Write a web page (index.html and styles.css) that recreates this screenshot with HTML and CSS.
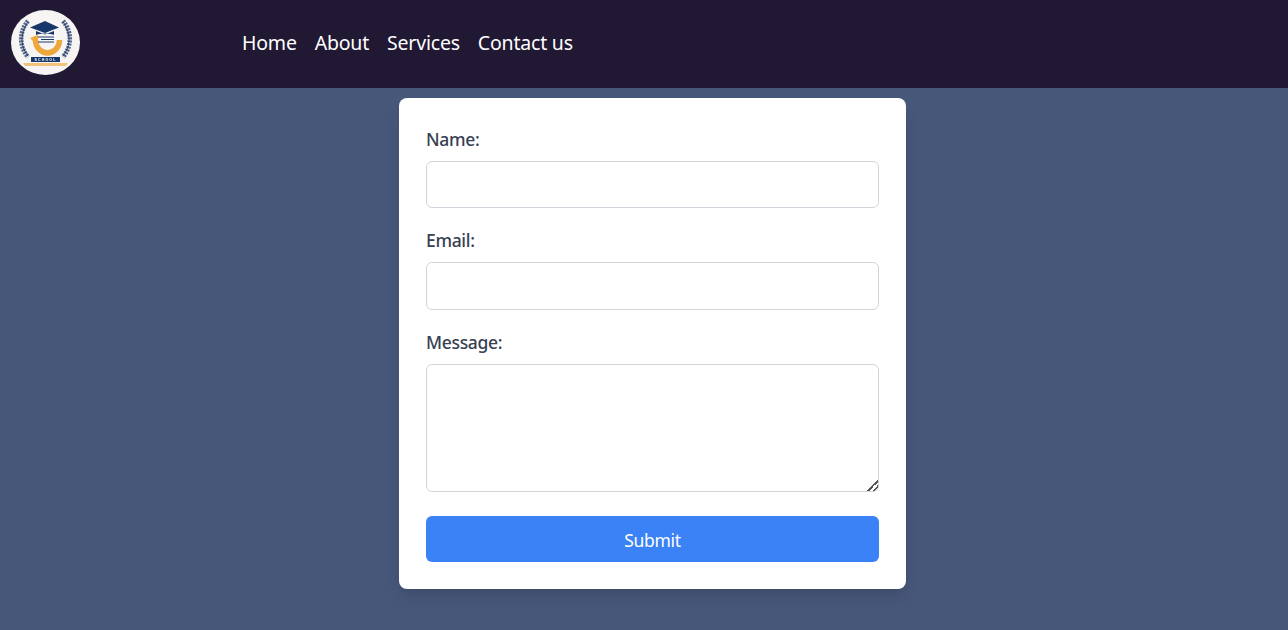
FILE: index.html
```html
<!DOCTYPE html>
<html lang="en">
<head>
<meta charset="utf-8">
<title>Contact</title>
<link rel="stylesheet" href="styles.css">
</head>
<body>
<header class="topbar">
  <svg class="logo" viewBox="0 0 69 65" aria-label="School logo">
    <ellipse cx="34.500" cy="32.500" rx="34.500" ry="32.500" fill="#f6f5f4"/>
    <g fill="none" stroke="#52648c" stroke-width="4.600" stroke-dasharray="2 1">
      <path d="M17 11C9 20 7 35 17 47"/>
      <path d="M52 11C60 20 62 35 52 47"/>
    </g>
    <g fill="none" stroke="#24375f" stroke-width="0.900">
      <path d="M17 12C10 21 8 35 17 46"/>
      <path d="M52 12C59 21 61 35 52 46"/>
    </g>
    <path d="M24.500 30A12 13 0 0 0 48.500 30" fill="none" stroke="#eda73a" stroke-width="5.500"/>
    <path d="M19 28L27 25V31H22Z" fill="#eda73a"/>
    <path d="M34 11L48 17.500L34 23L19 17.500Z" fill="#17376b"/>
    <path d="M25 21V25C30 23 38 23 43 25V21L34 24.500Z" fill="#17376b"/>
    <path d="M27 27H43M30 29.500H43M27 32H43" stroke="#1f3a6b" stroke-width="1.200" fill="none"/>
    <rect x="20" y="47" width="29" height="5" fill="#17376b"/>
    <path d="M12 53H57L55 56H14Z" fill="#f3c27a"/>
    <text class="logo-text" x="34.500" y="51.200">SCHOOL</text>
  </svg>
  <nav class="menu">
    <a href="#">Home</a>
    <a href="#">About</a>
    <a href="#">Services</a>
    <a href="#">Contact us</a>
  </nav>
</header>
<main class="page">
  <form class="card">
    <div class="field">
      <label class="label" for="name">Name:</label>
      <input class="control" id="name" type="text">
    </div>
    <div class="field">
      <label class="label" for="email">Email:</label>
      <input class="control" id="email" type="email">
    </div>
    <div class="field field-last">
      <label class="label" for="message">Message:</label>
      <textarea class="control area" id="message"></textarea>
    </div>
    <button class="submit" type="button">Submit</button>
  </form>
</main>
</body>
</html>
```
FILE: styles.css
```css
* { box-sizing: border-box; }
html, body { height: 100%; }
body {
  margin: 0;
  background: #475779;
  font-family: "Noto Sans", "Open Sans", sans-serif;
  overflow: hidden;
}
.topbar {
  height: 88px;
  background: #211834;
  display: flex;
  align-items: center;
}
.logo {
  width: 69px;
  height: 65px;
  margin-left: 11px;
  margin-top: -3px;
  flex: none;
  filter: blur(0.3px);
}
.logo-text {
  font-family: "Liberation Sans", sans-serif;
  font-size: 3.600px;
  font-weight: 700;
  letter-spacing: 1.100px;
  fill: #ffffff;
  text-anchor: middle;
}
.menu {
  display: flex;
  gap: 18px;
  margin-left: 162px;
  margin-top: -2px;
}
.menu a {
  color: #ffffff;
  text-decoration: none;
  font-size: 19.500px;
  line-height: 28px;
  letter-spacing: -0.200px;
}
.page {
  display: flex;
  justify-content: center;
  padding: 10px 0 0 17px;
}
.card {
  width: 507px;
  height: 491px;
  background: #ffffff;
  border-radius: 8px;
  padding: 28px 27px 27px;
  box-shadow: 0 10px 15px -3px rgba(0,0,0,.1), 0 4px 6px -4px rgba(0,0,0,.1);
}
.field { margin-bottom: 19px; }
.field-last { margin-bottom: 24px; }
.label {
  display: block;
  height: 27px;
  margin-bottom: 8px;
  color: #374151;
  font-size: 17.500px;
  font-weight: 500;
  line-height: 27px;
  letter-spacing: -0.320px;
}
.control {
  display: block;
  width: 100%;
  height: 47.400px;
  border: 1px solid #d1d5db;
  border-radius: 6px;
  background: #ffffff;
  padding: 8px 12px;
  outline: none;
}
.area { height: 128px; resize: vertical; }
.area::-webkit-resizer {
  background:
    linear-gradient(135deg, transparent 62%, #555 62%, #555 70%, transparent 70%, transparent 80%, #555 80%, #555 88%, transparent 88%);
}
.submit {
  display: block;
  width: 100%;
  height: 46px;
  border: 0;
  border-radius: 6px;
  padding: 2px 0 0;
  background: #3b82f6;
  color: #ffffff;
  font-family: inherit;
  font-size: 17.500px;
  letter-spacing: -0.300px;
}
```
